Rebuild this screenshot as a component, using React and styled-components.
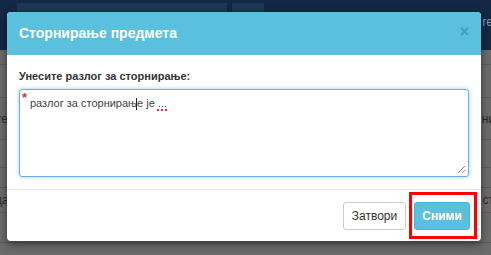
import React from "react";
import styled, { createGlobalStyle } from "styled-components";

const Global = createGlobalStyle`
  html, body { margin: 0; padding: 0; }
  body { width: 491px; height: 255px; overflow: hidden; font-family: "Liberation Sans", Arial, sans-serif; }
`;

const Page = styled.div`
  position: relative;
  width: 491px;
  height: 255px;
  background: #6b6b6b;
  display: flex;
  flex-direction: column;
  overflow: hidden;
`;

const TopBar = styled.div`
  height: 50px;
  background: #132844;
  display: flex;
  gap: 5px;
  padding: 3px 0 0 17px;
  box-sizing: border-box;
  align-items: flex-start;
`;

const BarBlock = styled.div`
  width: ${(p) => p.w}px;
  height: 10px;
  background: #1c3856;
`;

const BarText = styled.div`
  margin-left: auto;
  margin-top: 12px;
  color: #8a97a8;
  font-size: 12px;
  transform: translateX(2px);
`;

const Table = styled.div`
  flex: 1;
  display: flex;
  flex-direction: column;
`;

const Row = styled.div`
  height: ${(p) => p.h}px;
  border-bottom: 1px solid #5c5c5c;
  display: flex;
  align-items: center;
  justify-content: space-between;
  font-size: 12px;
  color: #2a2a2a;
  box-sizing: border-box;
`;

const Cell = styled.span`
  display: block;
  transform: translateX(${(p) => p.dx || 0}px);
`;

const Modal = styled.div`
  position: absolute;
  left: 7px;
  top: 12px;
  width: 474px;
  height: 229px;
  background: #fff;
  border-radius: 4px;
  box-shadow: 0 3px 9px rgba(0, 0, 0, 0.5);
  display: flex;
  flex-direction: column;
  overflow: hidden;
`;

const Header = styled.div`
  height: 43px;
  background: #5bc0de;
  display: flex;
  align-items: center;
  justify-content: space-between;
  padding: 0 12px 0 12px;
  box-sizing: border-box;
`;

const Title = styled.h4`
  margin: 0;
  color: #fff;
  font-size: 14px;
  font-weight: bold;
  font-family: "Liberation Sans", Arial, sans-serif;
  transform: translateY(-1px);
`;

const Close = styled.button`
  border: 0;
  background: transparent;
  color: #3b8aa6;
  opacity: 0.7;
  font-size: 16px;
  font-weight: bold;
  padding: 0;
  line-height: 1;
  margin-top: -3px;
  font-family: "Liberation Sans", Arial, sans-serif;
`;

const Body = styled.div`
  flex: 1;
  padding: 14px 12px 12px;
  display: flex;
  flex-direction: column;
  gap: 6px;
  box-sizing: border-box;
`;

const Label = styled.label`
  font-size: 11px;
  font-weight: bold;
  color: #333;
  line-height: 14px;
  font-family: "Liberation Sans", Arial, sans-serif;
`;

const AreaWrap = styled.div`
  position: relative;
  height: 88px;
  border: 1px solid #66afe9;
  border-radius: 3px;
  box-shadow: 0 0 4px rgba(102, 175, 233, 0.6);
  box-sizing: border-box;
  background: #fff;
`;

const Star = styled.span`
  position: absolute;
  left: 2px;
  top: 1px;
  color: #e03030;
  font-size: 13px;
  font-weight: bold;
  line-height: 1;
`;

const AreaText = styled.div`
  padding: 7px 10px;
  font-size: 11px;
  color: #444;
  font-family: "Liberation Sans", Arial, sans-serif;
`;

const Squiggle = styled.span`
  text-decoration: underline dotted #e03030;
  text-decoration-thickness: 2px;
  text-underline-offset: 2px;
  color: #444;
`;

const Grip = styled.svg`
  position: absolute;
  right: 2px;
  bottom: 2px;
`;

const Footer = styled.div`
  height: 52px;
  border-top: 1px solid #e5e5e5;
  display: flex;
  justify-content: flex-end;
  align-items: center;
  gap: 8px;
  padding: 0 11px 0 0;
  box-sizing: border-box;
`;

const Btn = styled.button`
  height: 28px;
  width: ${(p) => (p.primary ? 56 : 63)}px;
  padding: 0;
  border-radius: 3px;
  border: 1px solid ${(p) => (p.primary ? "#46b8da" : "#ccc")};
  background: ${(p) => (p.primary ? "#5bc0de" : "#fff")};
  color: ${(p) => (p.primary ? "#fff" : "#333")};
  font-weight: ${(p) => (p.primary ? "bold" : "normal")};
  font-size: 12px;
  font-family: "Liberation Sans", Arial, sans-serif;
  box-sizing: border-box;
`;

const Marked = styled.div`
  position: relative;
  display: flex;
  &::after {
    content: "";
    position: absolute;
    left: -5px;
    top: -10px;
    right: -7px;
    bottom: -9px;
    border: 3px solid #ff0000;
  }
`;

const Cursor = styled.span`
  display: inline-block;
  width: 0;
  position: relative;
  &::after {
    content: "";
    position: absolute;
    left: -1px;
    top: -9px;
    width: 1px;
    height: 12px;
    border-left: 1px solid #222;
  }
`;

export default function App() {
  return (
    <>
      <Global />
      <Page>
        <TopBar>
          <BarBlock w={210} />
          <BarBlock w={32} />
          <BarText>re</BarText>
        </TopBar>
        <Table>
          <Row h={15} />
          <Row h={33} />
          <Row h={42}>
            <Cell dx={-4}>те</Cell>
            <Cell dx={4}>ни</Cell>
          </Row>
          <Row h={28} />
          <Row h={20} />
          <Row h={25}>
            <Cell dx={-5}>да</Cell>
            <Cell dx={3}>ст</Cell>
          </Row>
          <Row h={30} />
        </Table>
        <Modal>
          <Header>
            <Title>Сторнирање предмета</Title>
            <Close>×</Close>
          </Header>
          <Body>
            <Label>Унесите разлог за сторнирање:</Label>
            <AreaWrap>
              <Star>*</Star>
              <AreaText>
                разлог за сторнирањ<Cursor />е је <Squiggle>...</Squiggle>
              </AreaText>
              <Grip width="9" height="9" viewBox="0 0 9 9">
                <path d="M8 1 L1 8 M8 5 L5 8" stroke="#888" strokeWidth="1" />
              </Grip>
            </AreaWrap>
          </Body>
          <Footer>
            <Btn>Затвори</Btn>
            <Marked>
              <Btn primary>Сними</Btn>
            </Marked>
          </Footer>
        </Modal>
      </Page>
    </>
  );
}
